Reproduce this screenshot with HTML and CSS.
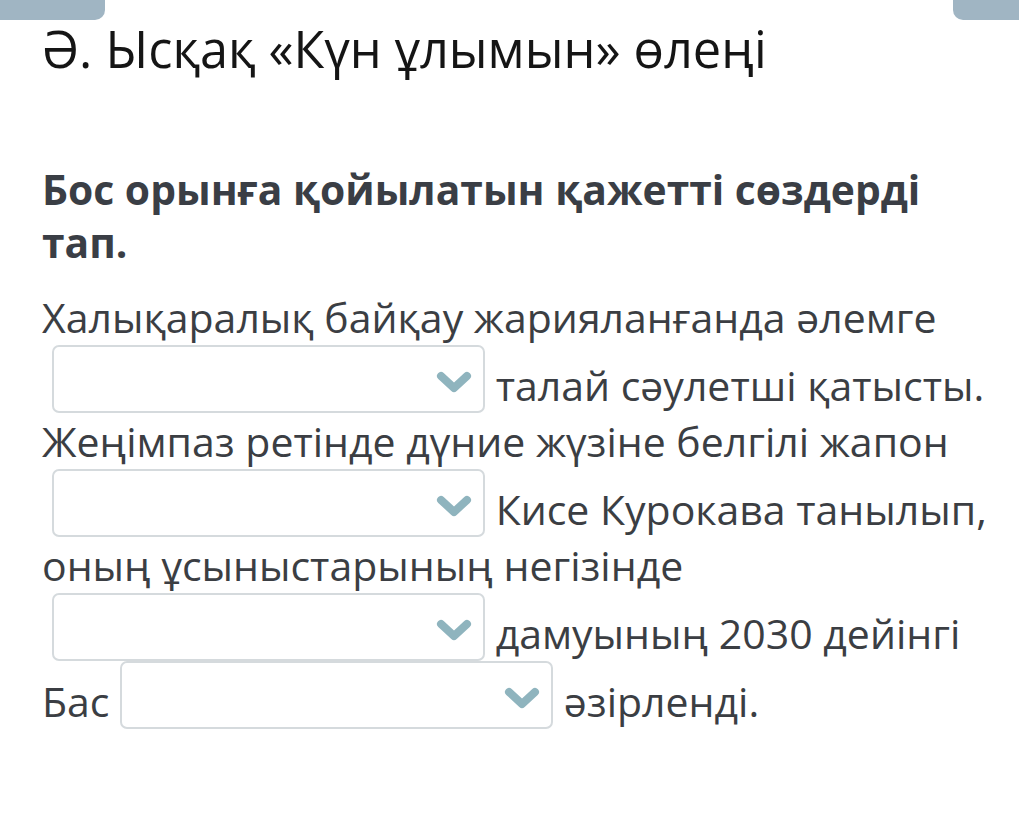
FILE: index.html
```html
<!DOCTYPE html>
<html lang="kk">
<head>
<meta charset="utf-8">
<title>Ә. Ысқақ «Күн ұлымын» өлеңі</title>
<link rel="stylesheet" href="styles.css">
</head>
<body>
<div class="tabs">
  <div class="tab tab-left"></div>
  <div class="tab tab-right"></div>
</div>
<main class="page">
  <h1 class="title">Ә. Ысқақ «Күн ұлымын» өлеңі</h1>
  <h2 class="question">Бос орынға қойылатын қажетті сөздерді тап.</h2>
  <p class="text">Халықаралық байқау жарияланғанда әлемге <span class="blank lead"><span class="chev"><svg viewBox="0 0 36 22" width="36" height="22"><path d="M5 5 L18 17 L31 5" fill="none" stroke="#8fb4be" stroke-width="8" stroke-linecap="round" stroke-linejoin="round"/></svg></span></span> талай сәулетші қатысты. Жеңімпаз ретінде дүние жүзіне белгілі жапон <span class="blank lead"><span class="chev"><svg viewBox="0 0 36 22" width="36" height="22"><path d="M5 5 L18 17 L31 5" fill="none" stroke="#8fb4be" stroke-width="8" stroke-linecap="round" stroke-linejoin="round"/></svg></span></span> Кисе Курокава танылып, оның ұсыныстарының негізінде <span class="blank lead"><span class="chev"><svg viewBox="0 0 36 22" width="36" height="22"><path d="M5 5 L18 17 L31 5" fill="none" stroke="#8fb4be" stroke-width="8" stroke-linecap="round" stroke-linejoin="round"/></svg></span></span> дамуының 2030 дейінгі Бас <span class="blank"><span class="chev"><svg viewBox="0 0 36 22" width="36" height="22"><path d="M5 5 L18 17 L31 5" fill="none" stroke="#8fb4be" stroke-width="8" stroke-linecap="round" stroke-linejoin="round"/></svg></span></span> әзірленді.</p>
</main>
</body>
</html>
```
FILE: styles.css
```css
html, body {
  margin: 0;
  padding: 0;
  background: #ffffff;
}

body {
  font-family: "Open Sans", "Noto Sans", sans-serif;
  width: 1019px;
  height: 819px;
  overflow: hidden;
}

.tabs {
  display: flex;
  justify-content: space-between;
  height: 0;
}

.tab {
  height: 20px;
  background: #a0b5c3;
}

.tab-left {
  width: 105px;
  border-bottom-right-radius: 10px;
}

.tab-right {
  width: 66px;
  border-bottom-left-radius: 10px;
}

.page {
  padding: 0 20px 0 42px;
}

.title {
  margin: 15px 0 0;
  font-size: 50.5px;
  font-weight: 400;
  line-height: 68px;
  color: #151515;
}

.question {
  max-width: 930px;
  margin: 80px 0 0;
  font-size: 40.8px;
  font-weight: 700;
  line-height: 53px;
  color: #3a3e45;
}

.text {
  margin: 20px 0 0;
  font-size: 41px;
  line-height: 56px;
  color: #3b3e43;
}

.blank {
  display: inline-flex;
  align-items: center;
  justify-content: flex-end;
  box-sizing: border-box;
  width: 433px;
  height: 68px;
  padding: 6px 11px 0 0;
  border: 2px solid #d5dadd;
  border-radius: 7px;
  background: #ffffff;
  vertical-align: text-bottom;
}

.blank.lead {
  margin-left: 10px;
}

.chev {
  display: flex;
}
```
